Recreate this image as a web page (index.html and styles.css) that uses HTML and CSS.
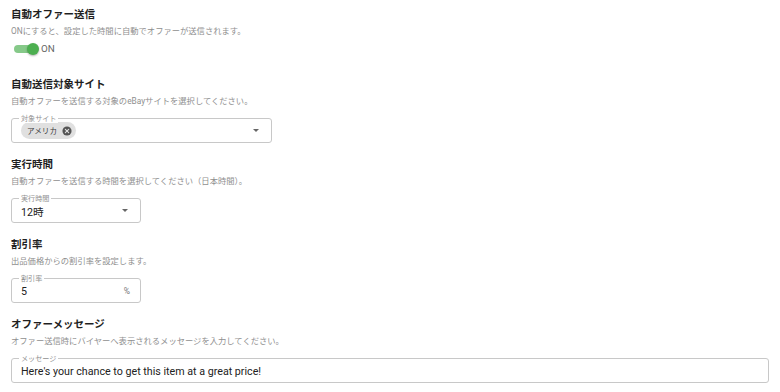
FILE: index.html
```html
<!DOCTYPE html>
<html lang="ja">
<head>
<meta charset="utf-8">
<link rel="stylesheet" href="styles.css">
</head>
<body>
<div class="page">
  <section class="sec sec-first">
    <h2 class="title">自動オファー送信</h2>
    <p class="desc">ONにすると、設定した時間に自動でオファーが送信されます。</p>
    <div class="switch-row">
      <span class="track"><span class="thumb"></span></span>
      <span class="switch-label">ON</span>
    </div>
  </section>

  <section class="sec">
    <h2 class="title">自動送信対象サイト</h2>
    <p class="desc">自動オファーを送信する対象のeBayサイトを選択してください。</p>
    <div class="field field-site">
      <span class="field-label">対象サイト</span>
      <span class="chip">
        <span class="chip-text">アメリカ</span>
        <svg class="chip-del" viewBox="0 0 24 24" width="10" height="10"><circle cx="12" cy="12" r="11" fill="#555555"/><path d="M8 8l8 8M16 8l-8 8" stroke="#e0e0e0" stroke-width="2.6" stroke-linecap="round"/></svg>
      </span>
      <span class="arrow"></span>
    </div>
  </section>

  <section class="sec">
    <h2 class="title">実行時間</h2>
    <p class="desc">自動オファーを送信する時間を選択してください（日本時間）。</p>
    <div class="field field-small">
      <span class="field-label">実行時間</span>
      <span class="value">12時</span>
      <span class="arrow"></span>
    </div>
  </section>

  <section class="sec">
    <h2 class="title">割引率</h2>
    <p class="desc">出品価格からの割引率を設定します。</p>
    <div class="field field-small">
      <span class="field-label">割引率</span>
      <span class="value">5</span>
      <span class="suffix">%</span>
    </div>
  </section>

  <section class="sec">
    <h2 class="title">オファーメッセージ</h2>
    <p class="desc">オファー送信時にバイヤーへ表示されるメッセージを入力してください。</p>
    <div class="field field-full">
      <span class="field-label">メッセージ</span>
      <span class="value">Here's your chance to get this item at a great price!</span>
    </div>
  </section>
</div>
</body>
</html>
```

FILE: styles.css
```css
html, body {
  margin: 0;
  padding: 0;
  background: #ffffff;
}
body {
  font-family: Roboto, "Noto Sans CJK JP", sans-serif;
  color: #222222;
}
.page {
  padding: 6.5px 11px 0 11px;
}
.sec {
  margin: 0 0 14px 0;
}
.sec-first {
  margin-bottom: 21.5px;
}
.title {
  margin: 0 0 4px 0;
  font-size: 10.5px;
  line-height: 14px;
  font-weight: 700;
  color: #1f1f1f;
  font-family: "Noto Sans CJK JP", sans-serif;
}
.desc {
  margin: 0;
  font-size: 8.3px;
  line-height: 13px;
  color: #8f8f8f;
}
.switch-row {
  margin-top: 4px;
  height: 14px;
  display: flex;
  align-items: center;
  padding-left: 3px;
}
.track {
  position: relative;
  display: block;
  width: 24px;
  height: 8px;
  border-radius: 4px;
  background: #86c989;
}
.thumb {
  position: absolute;
  right: -1px;
  top: -2px;
  width: 12px;
  height: 12px;
  border-radius: 50%;
  background: #4caf50;
  box-shadow: 0 1px 2px rgba(0,0,0,0.3);
}
.switch-label {
  margin-left: 3px;
  font-size: 9.8px;
  color: #666666;
}
.field {
  position: relative;
  box-sizing: border-box;
  height: 25px;
  margin-top: 10px;
  border: 1px solid #c8c8c8;
  border-radius: 3px;
  display: flex;
  align-items: center;
  padding: 0 12px 0 9px;
}
.field-site {
  width: 261px;
}
.field-small {
  width: 130px;
}
.field-full {
  width: 100%;
}
.field-label {
  position: absolute;
  top: -5px;
  left: 7px;
  padding: 0 2px;
  background: #ffffff;
  font-size: 7.1px;
  line-height: 9px;
  color: #909090;
}
.value {
  flex: 1;
  font-size: 10.7px;
  color: #222222;
  padding-top: 1px;
}
.chip {
  display: flex;
  align-items: center;
  height: 17px;
  border-radius: 8.5px;
  background: #e0e0e0;
  padding: 0 4px 0 6px;
}
.chip-text {
  font-size: 7.6px;
  color: #3a3a3a;
}
.chip-del {
  display: block;
  margin-left: 5px;
}
.arrow {
  margin-left: auto;
  width: 0;
  height: 0;
  border-left: 3px solid transparent;
  border-right: 3px solid transparent;
  border-top: 3px solid #666666;
}
.suffix {
  margin-left: auto;
  font-size: 8.5px;
  color: #777777;
  margin-right: -2px;
}
```
